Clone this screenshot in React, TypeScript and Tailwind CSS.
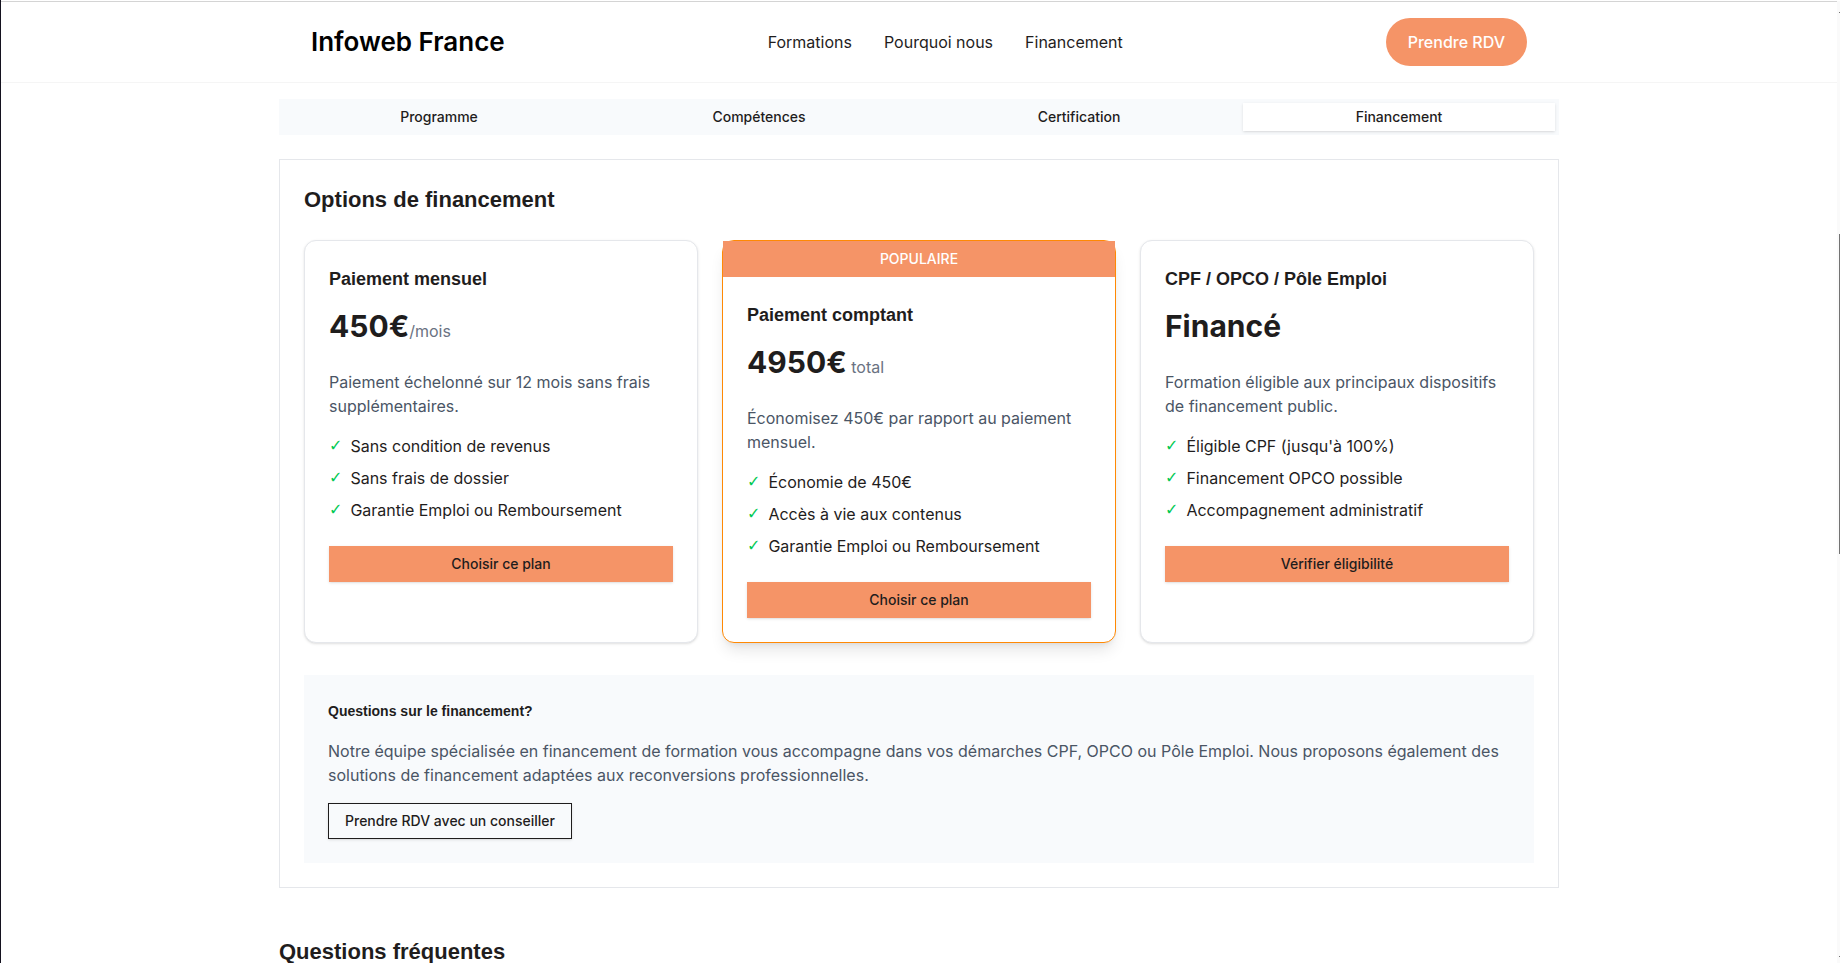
import { useState } from "react";
import clsx from "clsx";

type Plan = {
  title: string;
  price: string;
  unit?: string;
  description: string;
  features: string[];
  action: string;
  popular?: boolean;
};

const navLinks = ["Formations", "Pourquoi nous", "Financement"];

const tabs = ["Programme", "Compétences", "Certification", "Financement"];

const plans: Plan[] = [
  {
    title: "Paiement mensuel",
    price: "450€",
    unit: "/mois",
    description: "Paiement échelonné sur 12 mois sans frais supplémentaires.",
    features: [
      "Sans condition de revenus",
      "Sans frais de dossier",
      "Garantie Emploi ou Remboursement",
    ],
    action: "Choisir ce plan",
  },
  {
    title: "Paiement comptant",
    price: "4950€",
    unit: " total",
    description: "Économisez 450€ par rapport au paiement mensuel.",
    features: [
      "Économie de 450€",
      "Accès à vie aux contenus",
      "Garantie Emploi ou Remboursement",
    ],
    action: "Choisir ce plan",
    popular: true,
  },
  {
    title: "CPF / OPCO / Pôle Emploi",
    price: "Financé",
    description: "Formation éligible aux principaux dispositifs de financement public.",
    features: [
      "Éligible CPF (jusqu'à 100%)",
      "Financement OPCO possible",
      "Accompagnement administratif",
    ],
    action: "Vérifier éligibilité",
  },
];

function Header() {
  return (
    <header className="border-b border-neutral-100 bg-white">
      <div className="mx-auto flex max-w-[1280px] items-center justify-between px-8 py-4">
        <a href="#" className="text-[26px] leading-8 font-semibold text-black">
          Infoweb France
        </a>
        <nav className="flex gap-8">
          {navLinks.map((label) => (
            <a key={label} href="#" className="text-base">
              {label}
            </a>
          ))}
        </nav>
        <a
          href="#"
          className="rounded-full bg-[#f59467] px-[22px] py-3 text-base font-medium text-white"
        >
          Prendre RDV
        </a>
      </div>
    </header>
  );
}

function PlanCard({ plan }: { plan: Plan }) {
  return (
    <article
      className={clsx(
        "rounded-xl border bg-white",
        plan.popular ? "border-orange-400 shadow-lg" : "border-gray-200 shadow-sm",
      )}
    >
      {plan.popular && (
        <p className="bg-[#f59467] py-2 text-center text-sm font-medium text-white">POPULAIRE</p>
      )}
      <div className="p-6">
        <h3 className="font-['Liberation_Sans',sans-serif] text-lg leading-7 font-bold">
          {plan.title}
        </h3>
        <p className="mt-[13px] mb-6 text-3xl leading-10 font-bold whitespace-pre">
          {plan.price}
          {plan.unit && <span className="text-base font-normal text-gray-500">{plan.unit}</span>}
        </p>
        <p className="text-gray-600">{plan.description}</p>
        <ul className="mt-4 space-y-2">
          {plan.features.map((feature) => (
            <li key={feature} className="flex h-6 items-center gap-2">
              <span className="font-['DejaVu_Sans',sans-serif] text-green-500">✓</span>
              {feature}
            </li>
          ))}
        </ul>
        <button
          type="button"
          className="mt-6 h-9 w-full bg-[#f59467] text-sm font-medium shadow-sm"
        >
          {plan.action}
        </button>
      </div>
    </article>
  );
}

function ScrollRail() {
  return (
    <div className="flex w-[3px] flex-col items-end justify-between bg-neutral-50 pt-[11px] pb-1.5">
      <span className="h-px w-px bg-neutral-500" />
      <span className="mt-[221px] mb-auto h-80 w-px bg-neutral-500" />
      <span className="h-px w-px bg-neutral-500" />
    </div>
  );
}

export default function App() {
  const [active, setActive] = useState("Financement");

  return (
    <div className="flex h-screen border-l border-[#14121f] bg-white pt-px font-['Inter','Liberation_Sans',sans-serif] text-base text-[#1f1d1d]">
      <div className="flex-1 overflow-y-auto border-t border-neutral-300 [scrollbar-width:none]">
        <Header />
        <main className="mx-auto max-w-[1280px] pt-4">
          <div role="tablist" className="grid grid-cols-4 gap-2 bg-slate-50 p-1">
            {tabs.map((tab) => (
              <button
                key={tab}
                type="button"
                role="tab"
                aria-selected={tab === active}
                onClick={() => setActive(tab)}
                className={clsx(
                  "h-7 text-sm font-medium",
                  tab === active && "bg-white shadow-sm",
                )}
              >
                {tab}
              </button>
            ))}
          </div>

          <section className="mt-6 border border-gray-200 p-6">
            <h2 className="font-['Liberation_Sans',sans-serif] text-[22px] leading-8 font-bold">
              Options de financement
            </h2>
            <div className="mt-6 grid grid-cols-3 gap-6">
              {plans.map((plan) => (
                <PlanCard key={plan.title} plan={plan} />
              ))}
            </div>

            <div className="mt-8 bg-slate-50 p-6">
              <h3 className="font-['Liberation_Sans',sans-serif] text-sm leading-6 font-bold">
                Questions sur le financement?
              </h3>
              <p className="my-4 text-gray-600">
                Notre équipe spécialisée en financement de formation vous accompagne dans vos
                démarches CPF, OPCO ou Pôle Emploi. Nous proposons également des solutions de
                financement adaptées aux reconversions professionnelles.
              </p>
              <button
                type="button"
                className="block h-9 border border-[#1f1d1d] px-4 text-sm font-medium shadow-sm"
              >
                Prendre RDV avec un conseiller
              </button>
            </div>
          </section>

          <h2 className="mt-12 font-['Liberation_Sans',sans-serif] text-[22px] leading-8 font-bold">
            Questions fréquentes
          </h2>
        </main>
      </div>
      <ScrollRail />
    </div>
  );
}
